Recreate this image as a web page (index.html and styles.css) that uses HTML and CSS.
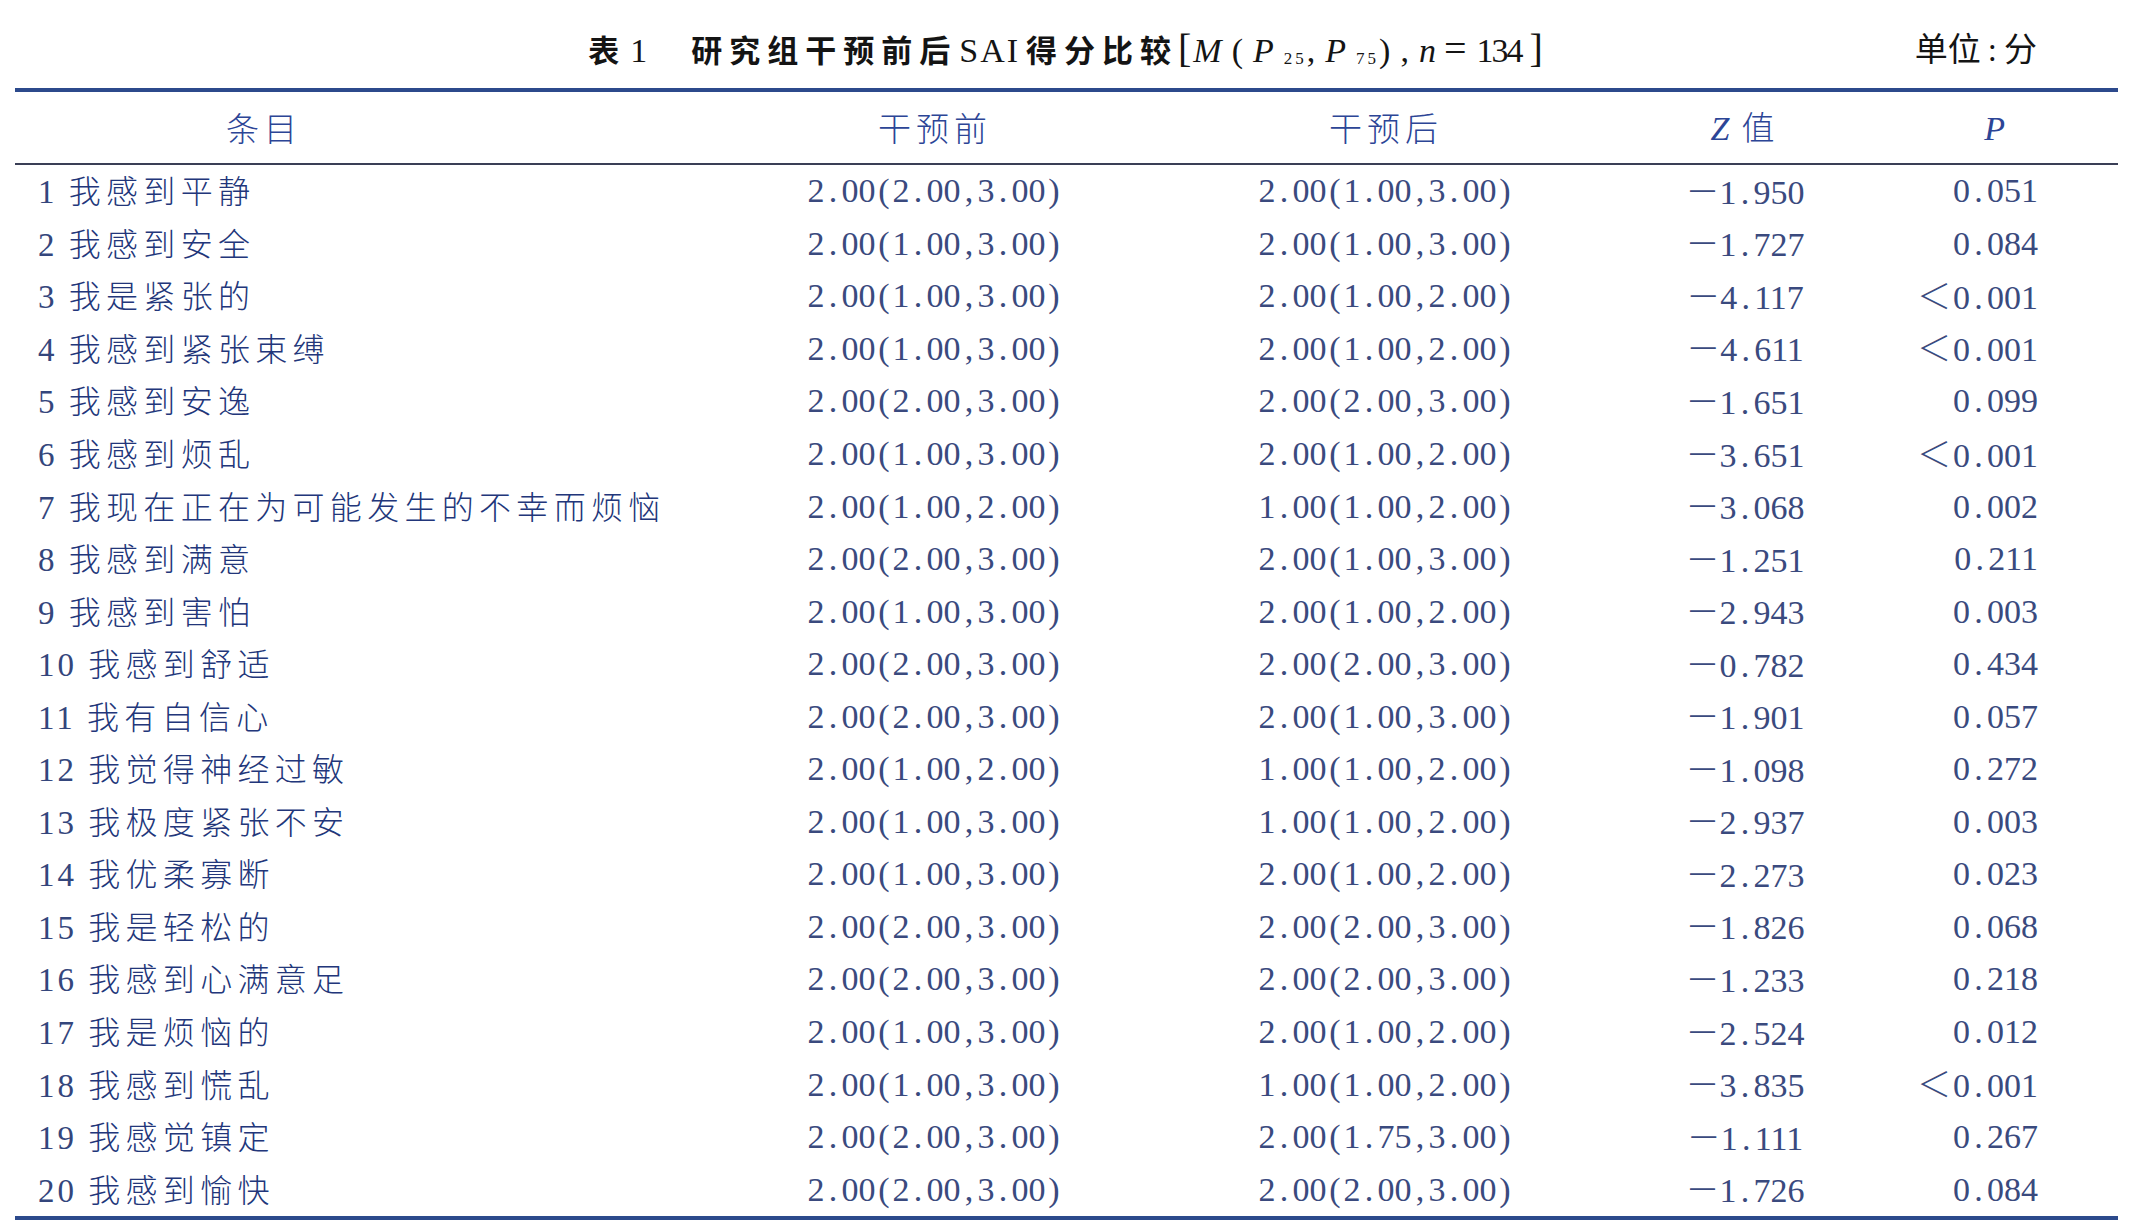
FILE: index.html
```html
<!DOCTYPE html>
<html lang="zh-CN">
<head>
<meta charset="utf-8">
<title>表1 研究组干预前后SAI得分比较</title>
<link rel="stylesheet" href="styles.css">
</head>
<body>
<div class="page">
  <div class="caption">
    <div class="title"><span class="tno">表</span><span class="tnum">1</span>研究组干预前后<span class="lat">SAI</span>得分比较<span class="math"><span class="brk">[</span><i>M</i>(<i>P</i><sub>25</sub>,<i>P</i><sub>75</sub>),<i>n</i><span class="eq">=</span><span class="n134">134</span><span class="brk">]</span></span></div>
    <div class="unit">单位<span class="colon">:</span>分</div>
  </div>
  <table class="tbl">
    <colgroup>
      <col class="w1"><col class="w2"><col class="w3"><col class="w4"><col class="w5">
    </colgroup>
    <thead>
      <tr>
        <th class="h-item">条目</th>
        <th>干预前</th>
        <th>干预后</th>
        <th><i class="lat">Z</i> 值</th>
        <th class="h-p"><i class="lat">P</i></th>
      </tr>
    </thead>
    <tbody>
      <tr><td class="item">1 <span class="zh">我感到平静</span></td><td class="num">2<span class="c">.</span>00<span class="c">(</span>2<span class="c">.</span>00<span class="c">,</span>3<span class="c">.</span>00<span class="c">)</span></td><td class="num">2<span class="c">.</span>00<span class="c">(</span>1<span class="c">.</span>00<span class="c">,</span>3<span class="c">.</span>00<span class="c">)</span></td><td class="num"><span class="m">－</span>1<span class="c">.</span>950</td><td class="num p">0<span class="c">.</span>051</td></tr>
      <tr><td class="item">2 <span class="zh">我感到安全</span></td><td class="num">2<span class="c">.</span>00<span class="c">(</span>1<span class="c">.</span>00<span class="c">,</span>3<span class="c">.</span>00<span class="c">)</span></td><td class="num">2<span class="c">.</span>00<span class="c">(</span>1<span class="c">.</span>00<span class="c">,</span>3<span class="c">.</span>00<span class="c">)</span></td><td class="num"><span class="m">－</span>1<span class="c">.</span>727</td><td class="num p">0<span class="c">.</span>084</td></tr>
      <tr><td class="item">3 <span class="zh">我是紧张的</span></td><td class="num">2<span class="c">.</span>00<span class="c">(</span>1<span class="c">.</span>00<span class="c">,</span>3<span class="c">.</span>00<span class="c">)</span></td><td class="num">2<span class="c">.</span>00<span class="c">(</span>1<span class="c">.</span>00<span class="c">,</span>2<span class="c">.</span>00<span class="c">)</span></td><td class="num"><span class="m">－</span>4<span class="c">.</span>117</td><td class="num p"><span class="lt">＜</span>0<span class="c">.</span>001</td></tr>
      <tr><td class="item">4 <span class="zh">我感到紧张束缚</span></td><td class="num">2<span class="c">.</span>00<span class="c">(</span>1<span class="c">.</span>00<span class="c">,</span>3<span class="c">.</span>00<span class="c">)</span></td><td class="num">2<span class="c">.</span>00<span class="c">(</span>1<span class="c">.</span>00<span class="c">,</span>2<span class="c">.</span>00<span class="c">)</span></td><td class="num"><span class="m">－</span>4<span class="c">.</span>611</td><td class="num p"><span class="lt">＜</span>0<span class="c">.</span>001</td></tr>
      <tr><td class="item">5 <span class="zh">我感到安逸</span></td><td class="num">2<span class="c">.</span>00<span class="c">(</span>2<span class="c">.</span>00<span class="c">,</span>3<span class="c">.</span>00<span class="c">)</span></td><td class="num">2<span class="c">.</span>00<span class="c">(</span>2<span class="c">.</span>00<span class="c">,</span>3<span class="c">.</span>00<span class="c">)</span></td><td class="num"><span class="m">－</span>1<span class="c">.</span>651</td><td class="num p">0<span class="c">.</span>099</td></tr>
      <tr><td class="item">6 <span class="zh">我感到烦乱</span></td><td class="num">2<span class="c">.</span>00<span class="c">(</span>1<span class="c">.</span>00<span class="c">,</span>3<span class="c">.</span>00<span class="c">)</span></td><td class="num">2<span class="c">.</span>00<span class="c">(</span>1<span class="c">.</span>00<span class="c">,</span>2<span class="c">.</span>00<span class="c">)</span></td><td class="num"><span class="m">－</span>3<span class="c">.</span>651</td><td class="num p"><span class="lt">＜</span>0<span class="c">.</span>001</td></tr>
      <tr><td class="item">7 <span class="zh">我现在正在为可能发生的不幸而烦恼</span></td><td class="num">2<span class="c">.</span>00<span class="c">(</span>1<span class="c">.</span>00<span class="c">,</span>2<span class="c">.</span>00<span class="c">)</span></td><td class="num">1<span class="c">.</span>00<span class="c">(</span>1<span class="c">.</span>00<span class="c">,</span>2<span class="c">.</span>00<span class="c">)</span></td><td class="num"><span class="m">－</span>3<span class="c">.</span>068</td><td class="num p">0<span class="c">.</span>002</td></tr>
      <tr><td class="item">8 <span class="zh">我感到满意</span></td><td class="num">2<span class="c">.</span>00<span class="c">(</span>2<span class="c">.</span>00<span class="c">,</span>3<span class="c">.</span>00<span class="c">)</span></td><td class="num">2<span class="c">.</span>00<span class="c">(</span>1<span class="c">.</span>00<span class="c">,</span>3<span class="c">.</span>00<span class="c">)</span></td><td class="num"><span class="m">－</span>1<span class="c">.</span>251</td><td class="num p">0<span class="c">.</span>211</td></tr>
      <tr><td class="item">9 <span class="zh">我感到害怕</span></td><td class="num">2<span class="c">.</span>00<span class="c">(</span>1<span class="c">.</span>00<span class="c">,</span>3<span class="c">.</span>00<span class="c">)</span></td><td class="num">2<span class="c">.</span>00<span class="c">(</span>1<span class="c">.</span>00<span class="c">,</span>2<span class="c">.</span>00<span class="c">)</span></td><td class="num"><span class="m">－</span>2<span class="c">.</span>943</td><td class="num p">0<span class="c">.</span>003</td></tr>
      <tr><td class="item">10 <span class="zh">我感到舒适</span></td><td class="num">2<span class="c">.</span>00<span class="c">(</span>2<span class="c">.</span>00<span class="c">,</span>3<span class="c">.</span>00<span class="c">)</span></td><td class="num">2<span class="c">.</span>00<span class="c">(</span>2<span class="c">.</span>00<span class="c">,</span>3<span class="c">.</span>00<span class="c">)</span></td><td class="num"><span class="m">－</span>0<span class="c">.</span>782</td><td class="num p">0<span class="c">.</span>434</td></tr>
      <tr><td class="item">11 <span class="zh">我有自信心</span></td><td class="num">2<span class="c">.</span>00<span class="c">(</span>2<span class="c">.</span>00<span class="c">,</span>3<span class="c">.</span>00<span class="c">)</span></td><td class="num">2<span class="c">.</span>00<span class="c">(</span>1<span class="c">.</span>00<span class="c">,</span>3<span class="c">.</span>00<span class="c">)</span></td><td class="num"><span class="m">－</span>1<span class="c">.</span>901</td><td class="num p">0<span class="c">.</span>057</td></tr>
      <tr><td class="item">12 <span class="zh">我觉得神经过敏</span></td><td class="num">2<span class="c">.</span>00<span class="c">(</span>1<span class="c">.</span>00<span class="c">,</span>2<span class="c">.</span>00<span class="c">)</span></td><td class="num">1<span class="c">.</span>00<span class="c">(</span>1<span class="c">.</span>00<span class="c">,</span>2<span class="c">.</span>00<span class="c">)</span></td><td class="num"><span class="m">－</span>1<span class="c">.</span>098</td><td class="num p">0<span class="c">.</span>272</td></tr>
      <tr><td class="item">13 <span class="zh">我极度紧张不安</span></td><td class="num">2<span class="c">.</span>00<span class="c">(</span>1<span class="c">.</span>00<span class="c">,</span>3<span class="c">.</span>00<span class="c">)</span></td><td class="num">1<span class="c">.</span>00<span class="c">(</span>1<span class="c">.</span>00<span class="c">,</span>2<span class="c">.</span>00<span class="c">)</span></td><td class="num"><span class="m">－</span>2<span class="c">.</span>937</td><td class="num p">0<span class="c">.</span>003</td></tr>
      <tr><td class="item">14 <span class="zh">我优柔寡断</span></td><td class="num">2<span class="c">.</span>00<span class="c">(</span>1<span class="c">.</span>00<span class="c">,</span>3<span class="c">.</span>00<span class="c">)</span></td><td class="num">2<span class="c">.</span>00<span class="c">(</span>1<span class="c">.</span>00<span class="c">,</span>2<span class="c">.</span>00<span class="c">)</span></td><td class="num"><span class="m">－</span>2<span class="c">.</span>273</td><td class="num p">0<span class="c">.</span>023</td></tr>
      <tr><td class="item">15 <span class="zh">我是轻松的</span></td><td class="num">2<span class="c">.</span>00<span class="c">(</span>2<span class="c">.</span>00<span class="c">,</span>3<span class="c">.</span>00<span class="c">)</span></td><td class="num">2<span class="c">.</span>00<span class="c">(</span>2<span class="c">.</span>00<span class="c">,</span>3<span class="c">.</span>00<span class="c">)</span></td><td class="num"><span class="m">－</span>1<span class="c">.</span>826</td><td class="num p">0<span class="c">.</span>068</td></tr>
      <tr><td class="item">16 <span class="zh">我感到心满意足</span></td><td class="num">2<span class="c">.</span>00<span class="c">(</span>2<span class="c">.</span>00<span class="c">,</span>3<span class="c">.</span>00<span class="c">)</span></td><td class="num">2<span class="c">.</span>00<span class="c">(</span>2<span class="c">.</span>00<span class="c">,</span>3<span class="c">.</span>00<span class="c">)</span></td><td class="num"><span class="m">－</span>1<span class="c">.</span>233</td><td class="num p">0<span class="c">.</span>218</td></tr>
      <tr><td class="item">17 <span class="zh">我是烦恼的</span></td><td class="num">2<span class="c">.</span>00<span class="c">(</span>1<span class="c">.</span>00<span class="c">,</span>3<span class="c">.</span>00<span class="c">)</span></td><td class="num">2<span class="c">.</span>00<span class="c">(</span>1<span class="c">.</span>00<span class="c">,</span>2<span class="c">.</span>00<span class="c">)</span></td><td class="num"><span class="m">－</span>2<span class="c">.</span>524</td><td class="num p">0<span class="c">.</span>012</td></tr>
      <tr><td class="item">18 <span class="zh">我感到慌乱</span></td><td class="num">2<span class="c">.</span>00<span class="c">(</span>1<span class="c">.</span>00<span class="c">,</span>3<span class="c">.</span>00<span class="c">)</span></td><td class="num">1<span class="c">.</span>00<span class="c">(</span>1<span class="c">.</span>00<span class="c">,</span>2<span class="c">.</span>00<span class="c">)</span></td><td class="num"><span class="m">－</span>3<span class="c">.</span>835</td><td class="num p"><span class="lt">＜</span>0<span class="c">.</span>001</td></tr>
      <tr><td class="item">19 <span class="zh">我感觉镇定</span></td><td class="num">2<span class="c">.</span>00<span class="c">(</span>2<span class="c">.</span>00<span class="c">,</span>3<span class="c">.</span>00<span class="c">)</span></td><td class="num">2<span class="c">.</span>00<span class="c">(</span>1<span class="c">.</span>75<span class="c">,</span>3<span class="c">.</span>00<span class="c">)</span></td><td class="num"><span class="m">－</span>1<span class="c">.</span>111</td><td class="num p">0<span class="c">.</span>267</td></tr>
      <tr class="last"><td class="item">20 <span class="zh">我感到愉快</span></td><td class="num">2<span class="c">.</span>00<span class="c">(</span>2<span class="c">.</span>00<span class="c">,</span>3<span class="c">.</span>00<span class="c">)</span></td><td class="num">2<span class="c">.</span>00<span class="c">(</span>2<span class="c">.</span>00<span class="c">,</span>3<span class="c">.</span>00<span class="c">)</span></td><td class="num"><span class="m">－</span>1<span class="c">.</span>726</td><td class="num p">0<span class="c">.</span>084</td></tr>
    </tbody>
  </table>
</div>
</body>
</html>
```

FILE: styles.css
```css
html, body {
  margin: 0;
  padding: 0;
  background: #ffffff;
}

.page {
  padding: 0 12px 0 15px;
  font-family: "Liberation Serif", "Noto Sans CJK SC", serif;
}

/* caption row */
.caption {
  box-sizing: border-box;
  height: 88px;
  padding-top: 10px;
  display: grid;
  grid-template-columns: 1fr auto 1fr;
  align-items: center;
}

.title {
  grid-column: 2;
  white-space: nowrap;
  font-family: "Noto Sans CJK SC", sans-serif;
  font-weight: 700;
  font-size: 31px;
  letter-spacing: 7px;
  color: #141414;
  line-height: 1;
}

.tnum {
  font-family: "Liberation Serif", serif;
  font-weight: 400;
  font-size: 34px;
  margin: 0 44px 0 4px;
  letter-spacing: 0;
}

.title .lat {
  font-family: "Liberation Serif", serif;
  font-weight: 400;
  font-size: 34px;
  letter-spacing: 2px;
  margin: 0 6px 0 2px;
}

.math {
  font-family: "Liberation Serif", serif;
  font-weight: 400;
  font-size: 34px;
  letter-spacing: 10px;
}

.math i {
  font-style: italic;
}

.math sub {
  font-size: 17px;
  vertical-align: -2px;
  line-height: 0;
  margin-left: 0;
  letter-spacing: 3px;
}

.math .brk {
  font-size: 40px;
  letter-spacing: 2px;
}

.math .eq {
  font-size: 40px;
  margin: 0 0 0 -2px;
}

.math .n134 {
  letter-spacing: -2px;
  margin-right: 8px;
}

.unit {
  grid-column: 3;
  justify-self: end;
  margin-right: 81px;
  font-family: "Noto Sans CJK SC", sans-serif;
  font-size: 33px;
  color: #141414;
  line-height: 1;
}

.unit .colon {
  font-family: "Liberation Serif", serif;
  margin: 0 7px;
}

/* table */
.tbl {
  width: 100%;
  table-layout: fixed;
  border-collapse: separate;
  border-spacing: 0;
}

.w1 { width: 675px; }
.w2 { width: 490px; }
.w3 { width: 412px; }
.w4 { width: 306px; }
.w5 { width: 220px; }

.tbl th {
  height: 71px;
  padding: 0;
  border-top: 4px solid #2c4a8c;
  border-bottom: 2px solid #3a3f56;
  font-family: "Noto Sans CJK SC", sans-serif;
  font-weight: 300;
  font-size: 33px;
  letter-spacing: 5px;
  color: #2c4596;
  text-align: center;
  vertical-align: middle;
  line-height: 1;
}

.tbl th .lat {
  font-family: "Liberation Serif", serif;
  font-style: italic;
  font-size: 34px;
  letter-spacing: 0;
}

.tbl th.h-item {
  text-align: left;
  padding-left: 211px;
}

.tbl th.h-p {
  text-align: right;
  padding-right: 113px;
}

.tbl td {
  height: 52.55px;
  padding: 0;
  vertical-align: middle;
  line-height: 1;
  white-space: nowrap;
}

.tbl tr.last td {
  border-bottom: 4px solid #2c4a8c;
}

.item {
  padding-left: 23px !important;
  font-size: 33px;
  letter-spacing: 3px;
  color: #34467c;
}

.item .zh {
  font-family: "Noto Sans CJK SC", sans-serif;
  font-weight: 300;
  font-size: 32px;
  letter-spacing: 5.3px;
  color: #22367a;
}

.num {
  font-size: 34px;
  color: #3a4a7e;
  text-align: center;
}

.num.p {
  text-align: right;
  padding-right: 80px !important;
}

.c {
  display: inline-block;
  width: 0.5em;
  text-align: center;
}

.m {
  display: inline-block;
  width: 1em;
  font-family: "Noto Sans CJK SC", sans-serif;
  font-weight: 300;
  text-align: left;
}

.lt {
  display: inline-block;
  width: 1.05em;
  font-family: "Noto Sans CJK SC", sans-serif;
  font-weight: 300;
  text-align: left;
}
```
